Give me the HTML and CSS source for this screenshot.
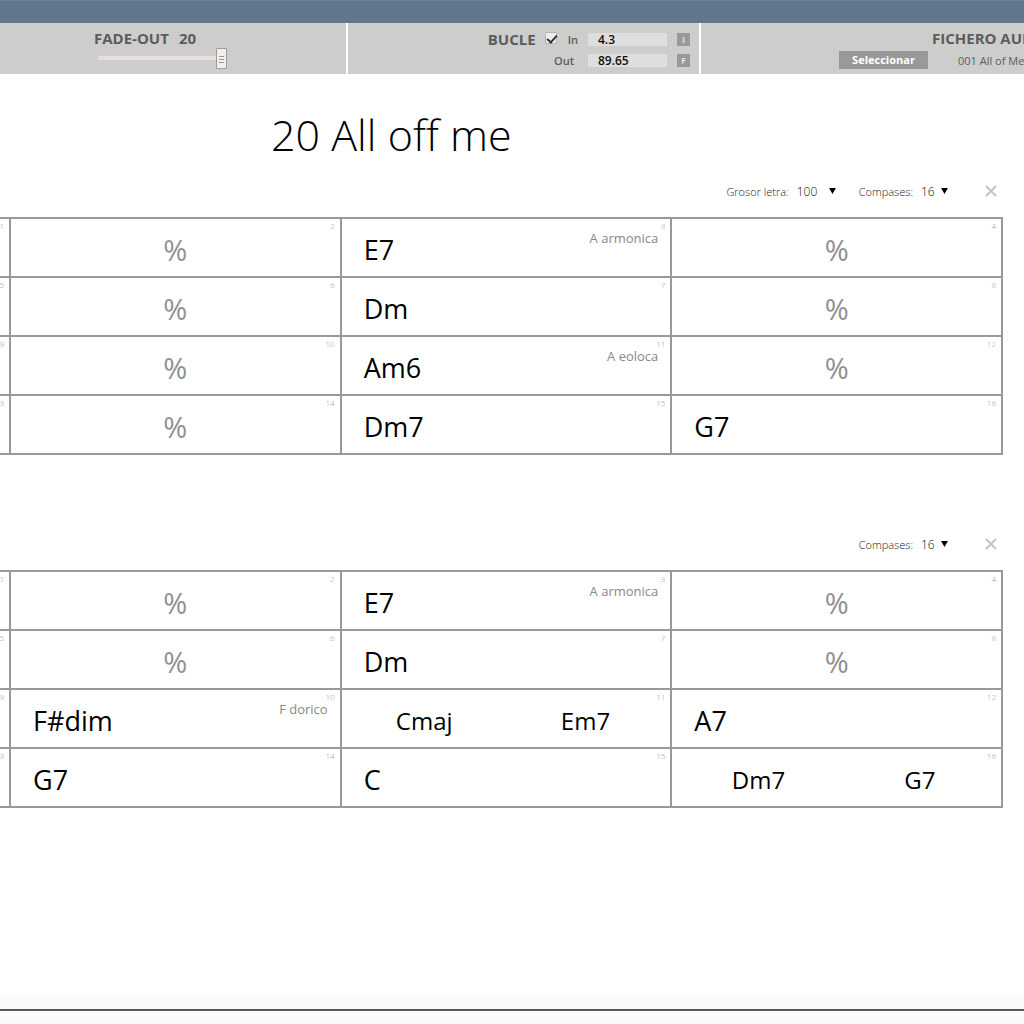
FILE: index.html
```html
<!DOCTYPE html>
<html lang="es">
<head>
<meta charset="utf-8">
<title>20 All off me</title>
<link rel="stylesheet" href="styles.css">
</head>
<body>
<header>
  <div class="topbar"></div>
  <div class="toolbar">
    <section class="panel fade">
      <label class="heading" for="fade"><span>FADE-OUT</span><span>20</span></label>
      <input class="slider" id="fade" type="range" min="0" max="20" value="20">
    </section>
    <section class="panel loop">
      <div class="loop-row">
        <label class="heading" for="loop">BUCLE</label>
        <input class="tick" id="loop" type="checkbox" checked>
        <label class="small" for="in">In</label>
        <input class="time" id="in" type="text" value="4.3">
        <button class="mark" type="button">I</button>
      </div>
      <div class="loop-row">
        <label class="small" for="out">Out</label>
        <input class="time" id="out" type="text" value="89.65">
        <button class="mark" type="button">F</button>
      </div>
    </section>
    <section class="panel file">
      <h2 class="heading">FICHERO AUDIO</h2>
      <div class="file-row">
        <button class="choose" type="button">Seleccionar</button>
        <span class="filename">001 All of Me</span>
      </div>
    </section>
  </div>
</header>
<main>
  <h1>20 All off me</h1>
  <section class="part">
    <div class="options">
      <label for="weight">Grosor letra:</label>
      <select class="weight" id="weight"><option>100</option></select>
      <svg class="arrow gap" viewBox="0 0 8 7"><path d="M0 0h8L4 7z"/></svg>
      <label for="bars1">Compases:</label>
      <select id="bars1"><option>16</option></select>
      <svg class="arrow" viewBox="0 0 8 7"><path d="M0 0h8L4 7z"/></svg>
      <button class="close" type="button" aria-label="Cerrar"><svg viewBox="0 0 12 12"><path d="M1 1l10 10M11 1L1 11"/></svg></button>
    </div>
    <table>
      <colgroup><col class="edge"><col><col><col></colgroup>
      <tr>
        <td><div class="bar"><span class="num">1</span></div></td>
        <td><div class="bar repeat"><span class="num">2</span>%</div></td>
        <td><div class="bar"><span class="num">3</span>E7<span class="scale">A armonica</span></div></td>
        <td><div class="bar repeat"><span class="num">4</span>%</div></td>
      </tr>
      <tr>
        <td><div class="bar"><span class="num">5</span></div></td>
        <td><div class="bar repeat"><span class="num">6</span>%</div></td>
        <td><div class="bar"><span class="num">7</span>Dm</div></td>
        <td><div class="bar repeat"><span class="num">8</span>%</div></td>
      </tr>
      <tr>
        <td><div class="bar"><span class="num">9</span></div></td>
        <td><div class="bar repeat"><span class="num">10</span>%</div></td>
        <td><div class="bar"><span class="num">11</span>Am6<span class="scale">A eoloca</span></div></td>
        <td><div class="bar repeat"><span class="num">12</span>%</div></td>
      </tr>
      <tr>
        <td><div class="bar"><span class="num">13</span></div></td>
        <td><div class="bar repeat"><span class="num">14</span>%</div></td>
        <td><div class="bar"><span class="num">15</span>Dm7</div></td>
        <td><div class="bar"><span class="num">16</span>G7</div></td>
      </tr>
    </table>
  </section>
  <section class="part">
    <div class="options">
      <label for="bars2">Compases:</label>
      <select id="bars2"><option>16</option></select>
      <svg class="arrow" viewBox="0 0 8 7"><path d="M0 0h8L4 7z"/></svg>
      <button class="close" type="button" aria-label="Cerrar"><svg viewBox="0 0 12 12"><path d="M1 1l10 10M11 1L1 11"/></svg></button>
    </div>
    <table>
      <colgroup><col class="edge"><col><col><col></colgroup>
      <tr>
        <td><div class="bar"><span class="num">1</span></div></td>
        <td><div class="bar repeat"><span class="num">2</span>%</div></td>
        <td><div class="bar"><span class="num">3</span>E7<span class="scale">A armonica</span></div></td>
        <td><div class="bar repeat"><span class="num">4</span>%</div></td>
      </tr>
      <tr>
        <td><div class="bar"><span class="num">5</span></div></td>
        <td><div class="bar repeat"><span class="num">6</span>%</div></td>
        <td><div class="bar"><span class="num">7</span>Dm</div></td>
        <td><div class="bar repeat"><span class="num">8</span>%</div></td>
      </tr>
      <tr>
        <td><div class="bar"><span class="num">9</span></div></td>
        <td><div class="bar"><span class="num">10</span>F#dim<span class="scale">F dorico</span></div></td>
        <td><div class="bar split"><span class="num">11</span><span>Cmaj</span><span>Em7</span></div></td>
        <td><div class="bar"><span class="num">12</span>A7</div></td>
      </tr>
      <tr>
        <td><div class="bar"><span class="num">13</span></div></td>
        <td><div class="bar"><span class="num">14</span>G7</div></td>
        <td><div class="bar"><span class="num">15</span>C</div></td>
        <td><div class="bar split"><span class="num">16</span><span>Dm7</span><span>G7</span></div></td>
      </tr>
    </table>
  </section>
</main>
<footer><div class="rule"></div></footer>
</body>
</html>
```
FILE: styles.css
```css
* { box-sizing: border-box; }
body {
  margin: 0;
  min-height: 100vh;
  display: flex;
  flex-direction: column;
  overflow-x: hidden;
  background: #fff;
  color: #000;
  font-family: "Open Sans", "Noto Sans", sans-serif;
}
button, input, select { font: inherit; margin: 0; padding: 0; border: 0; border-radius: 0; }

.topbar { height: 23px; background: #62778c; border-top: 1px solid #6c8298; }
.toolbar {
  display: grid;
  grid-template-columns: 346fr 351fr 323fr;
  gap: 2px;
  height: 51px;
}
.panel {
  min-width: 0;
  overflow: hidden;
  background: #cdcdcd;
  color: #5c5c5c;
  white-space: nowrap;
}
.heading { margin: 0; font-size: 15px; line-height: 20px; font-weight: 700; }

.fade { padding: 5px 0 0 94px; }
.fade .heading { display: flex; gap: 10px; }
.slider {
  appearance: none;
  display: block;
  width: 129px;
  height: 20px;
  margin-left: 4px;
  background: linear-gradient(#e8dfdb, #e8dfdb) center / 100% 4px no-repeat;
}
.slider::-webkit-slider-thumb {
  appearance: none;
  width: 11px;
  height: 21px;
  border: 1px solid #a39a92;
  border-radius: 1px;
  background:
    linear-gradient(#999 1px, transparent 1px) center 7px / 5px 3px no-repeat,
    linear-gradient(#999 1px, transparent 1px) center 10px / 5px 3px no-repeat,
    linear-gradient(#999 1px, transparent 1px) center 13px / 5px 3px no-repeat,
    #f4eeea;
}

.loop { padding: 6px 9px 0 0; }
.loop-row { display: flex; align-items: center; justify-content: flex-end; height: 21px; }
.loop .heading { margin-bottom: 2px; }
.tick {
  appearance: none;
  width: 12px;
  height: 12px;
  margin: 0 11px 4px 9px;
  border: 1px solid #b4b4b4;
  border-radius: 2px;
  background: #eee;
}
.tick:checked::before {
  content: "";
  display: block;
  width: 8px;
  height: 4px;
  margin: 2px 0 0 1px;
  border: solid #333;
  border-width: 0 0 2px 2px;
  transform: rotate(-48deg);
}
.small { font-size: 11px; font-weight: 600; margin-right: 10px; }
.loop-row + .loop-row .small { margin-right: 14px; }
.time {
  width: 79px;
  height: 13px;
  padding-left: 10px;
  background: #dedede;
  color: #111;
  font-size: 12px;
  line-height: 13px;
  font-weight: 600;
}
.mark {
  width: 13px;
  height: 13px;
  margin-left: 10px;
  background: #999;
  color: #e4e4e4;
  font-size: 8px;
  line-height: 13px;
  font-weight: 700;
}

.file { padding: 5px 0 0 138px; }
.file .heading { padding-left: 93px; }
.file-row { display: flex; align-items: center; height: 24px; }
.choose {
  flex: none;
  width: 89px;
  height: 18px;
  background: #999;
  color: #fff;
  font-size: 11px;
  line-height: 18px;
  font-weight: 700;
}
.filename { margin-left: 30px; font-size: 11px; font-weight: 500; }

main { flex: 1; padding-right: 21px; }
h1 {
  margin: 0;
  padding: 31px 0 0 271px;
  font-size: 43px;
  line-height: 60px;
  font-weight: 300;
}
.part { margin-bottom: 63px; }
.options {
  display: flex;
  align-items: center;
  justify-content: flex-end;
  height: 52px;
  color: #222;
  font-size: 11px;
  font-weight: 300;
}
.options select {
  appearance: none;
  width: 20px;
  margin-left: 8px;
  background: none;
  color: #111;
  font-size: 12px;
}
.options .weight { width: 32px; }
.arrow { width: 7px; height: 6px; }
.gap { margin-right: 23px; }
.close { width: 12px; height: 12px; margin: 0 6px 0 37px; background: none; }
.close svg { display: block; width: 12px; height: 12px; fill: none; stroke: #c4c4c4; stroke-width: 2; }

table { width: 100%; table-layout: fixed; border-collapse: collapse; }
.edge { width: 10px; }
td { height: 59px; padding: 0; border: 2px solid #999; }
td:first-child { border-left: 0; }
.bar {
  position: relative;
  display: flex;
  align-items: center;
  height: 57px;
  padding: 3px 0 0 22px;
  overflow: hidden;
  font-size: 27px;
  white-space: nowrap;
}
td:first-child .bar { padding: 0; }
.num {
  position: absolute;
  top: 1px;
  right: 5px;
  color: #999;
  font-size: 8px;
  line-height: 12px;
  font-weight: 300;
}
.scale {
  position: absolute;
  top: 9px;
  right: 12px;
  color: #888;
  font-size: 13px;
  line-height: 20px;
}
.repeat { justify-content: center; padding-left: 0; color: #909090; font-size: 29px; }
.split { justify-content: space-around; padding: 3px 6px 0 0; font-size: 24px; }

footer { height: 29px; padding-top: 14px; background: #fafafa; }
.rule { height: 2px; background: #555; }
```
